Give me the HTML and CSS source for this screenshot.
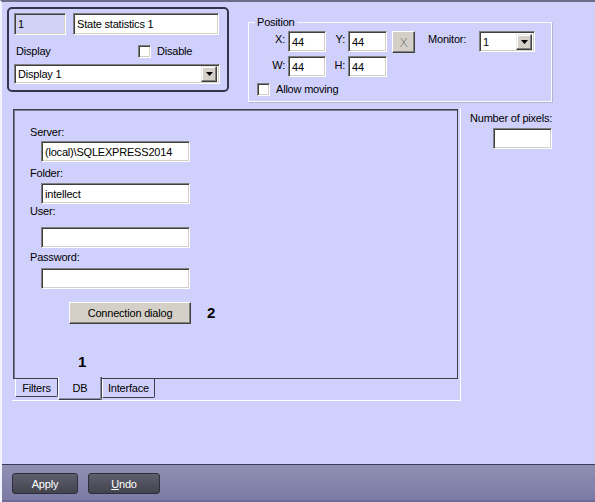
FILE: index.html
```html
<!DOCTYPE html>
<html>
<head>
<meta charset="utf-8">
<link rel="stylesheet" href="styles.css">
</head>
<body>
<div class="window">
  <div class="top">
    <div class="idpanel">
      <div class="row-fields">
        <div class="field field-id">1</div>
        <div class="field field-name">State statistics 1</div>
      </div>
      <div class="row-display">
        <span class="lbl-display">Display</span>
        <span class="check"><span class="box"></span><span>Disable</span></span>
      </div>
      <div class="field select select-display">
        <span class="val">Display 1</span>
        <span class="dd"><svg width="7" height="4" viewBox="0 0 7 4"><polygon points="0,0 7,0 3.5,4" fill="#000"/></svg></span>
      </div>
    </div>
    <fieldset class="position">
      <legend>Position</legend>
      <div class="prow prow1">
        <span class="plbl plbl-x">X:</span>
        <div class="field pin pin-x">44</div>
        <span class="plbl plbl-y">Y:</span>
        <div class="field pin pin-y">44</div>
        <div class="xbtn">X</div>
        <span class="mon">Monitor:</span>
        <div class="field select select-mon">
          <span class="val">1</span>
          <span class="dd"><svg width="7" height="4" viewBox="0 0 7 4"><polygon points="0,0 7,0 3.5,4" fill="#000"/></svg></span>
        </div>
      </div>
      <div class="prow prow2">
        <span class="plbl plbl-x">W:</span>
        <div class="field pin pin-x">44</div>
        <span class="plbl plbl-y">H:</span>
        <div class="field pin pin-y">44</div>
      </div>
      <div class="prow prow3">
        <span class="check"><span class="box"></span><span>Allow moving</span></span>
      </div>
    </fieldset>
  </div>

  <div class="middle">
    <div class="tabframe">
      <div class="tabpanel">
        <div class="flbl flbl-server">Server:</div>
        <div class="field dbin dbin-server">(local)\SQLEXPRESS2014</div>
        <div class="flbl flbl-folder">Folder:</div>
        <div class="field dbin dbin-folder">intellect</div>
        <div class="flbl flbl-user">User:</div>
        <div class="field dbin dbin-user"></div>
        <div class="flbl flbl-pass">Password:</div>
        <div class="field dbin dbin-pass"></div>
        <div class="btnrow">
          <div class="connbtn">Connection dialog</div>
          <span class="marker marker-2">2</span>
        </div>
        <div class="marker marker-1">1</div>
      </div>
      <div class="tabs">
        <div class="tab tab-filters">Filters</div>
        <div class="tab tab-db">DB</div>
        <div class="tab tab-interface">Interface</div>
      </div>
    </div>
    <div class="pixels">
      <div class="pixlbl">Number of pixels:</div>
      <div class="field pixin"></div>
    </div>
  </div>

  <div class="bottombar">
    <div class="bbtn bbtn-apply">Apply</div>
    <div class="bbtn bbtn-undo"><u>U</u>ndo</div>
  </div>
</div>
</body>
</html>
```

FILE: styles.css
```css
* { box-sizing: border-box; }
html, body { margin: 0; padding: 0; }
body {
  font-family: "Liberation Sans", Arial, sans-serif;
  font-size: 11px;
  letter-spacing: -0.2px;
  color: #000;
}
.window {
  width: 595px;
  height: 502px;
  background: #d0d0fc;
  border-top: 2px solid #6c6c88;
  border-left: 2px solid #f2f2ff;
  display: flex;
  flex-direction: column;
  overflow: hidden;
}

/* ---------- generic controls ---------- */
.field {
  background: #fff;
  border: 1px solid;
  border-color: #808080 #ffffff #ffffff #808080;
  box-shadow: inset 1px 1px 0 #404040, inset -1px -1px 0 #d4d0c8;
  display: flex;
  align-items: center;
  padding-left: 3px;
  line-height: 14px;
  white-space: nowrap;
}
.select { padding-right: 2px; justify-content: space-between; }
.dd {
  width: 16px;
  height: 16px;
  background: #d4d0c8;
  border: 1px solid;
  border-color: #e8e8e8 #404040 #404040 #e8e8e8;
  box-shadow: inset -1px -1px 0 #808080, inset 1px 1px 0 #fff;
  display: flex;
  align-items: center;
  justify-content: center;
}
.check { display: flex; align-items: center; }
.box {
  width: 13px;
  height: 13px;
  background: #fff;
  border: 1px solid;
  border-color: #808080 #ffffff #ffffff #808080;
  box-shadow: inset 1px 1px 0 #404040, inset -1px -1px 0 #d4d0c8;
  margin-right: 6px;
}

/* ---------- top ---------- */
.top {
  height: 106px;
  display: flex;
  align-items: flex-start;
  padding: 5px 0 0 5px;
}
.idpanel {
  width: 222px;
  height: 85px;
  border: 2px solid #34344c;
  border-radius: 5px;
  padding: 4px 0 0 5px;
}
.row-fields { display: flex; height: 22px; }
.field-id { width: 52px; height: 22px; background: #d2d2f6; margin-right: 7px; }
.field-name { width: 146px; height: 22px; }
.row-display {
  display: flex;
  align-items: center;
  height: 16px;
  margin-top: 8px;
}
.lbl-display { width: 124px; padding-left: 2px; }
.select-display { width: 206px; height: 20px; margin-top: 5px; }

.position {
  margin: 8px 0 0 19px;
  padding: 2px 0 0 0;
  width: 304px;
  height: 87px;
  border: 1px solid #fbfbff;
  box-shadow: 1px 1px 0 #b4b4d0;
  min-inline-size: 0;
}
.position legend {
  margin-left: 6px;
  padding: 0 2px;
  line-height: 14px;
}
.prow { display: flex; align-items: flex-start; }
.prow1 { height: 22px; }
.prow2 { height: 21px; margin-top: 3px; }
.prow3 { margin-top: 5px; padding-left: 8px; height: 14px; align-items: center; }
.plbl { text-align: right; padding-right: 3px; line-height: 14px; padding-top: 1px; }
.plbl-x { width: 39px; }
.plbl-y { width: 22px; }
.prow2 .plbl { padding-top: 2px; }
.pin { height: 21px; padding-left: 3px; }
.pin-x { width: 38px; }
.pin-y { width: 39px; }
.xbtn {
  width: 23px;
  height: 22px;
  margin-left: 5px;
  background: #d4d0c8;
  border: 1px solid;
  border-color: #fff #404040 #404040 #fff;
  box-shadow: inset -1px -1px 0 #808080;
  display: flex;
  align-items: center;
  justify-content: center;
  color: #707070;
  font-size: 13px;
  font-family: "DejaVu Sans", sans-serif;
  font-weight: 200;
}
.mon { margin-left: 13px; width: 51px; line-height: 14px; padding-top: 1px; }
.select-mon { width: 56px; height: 21px; }

/* ---------- middle ---------- */
.middle { display: flex; align-items: flex-start; }
.tabframe {
  margin-left: 10px;
  width: 449px;
  height: 293px;
  padding: 1px 0 0 1px;
  border-right: 1px solid #fff;
  border-bottom: 1px solid #fff;
}
.tabpanel {
  width: 445px;
  height: 270px;
  border: 1px solid #3c3c4c;
  box-shadow: inset 1px 1px 0 #7c7c94;
  padding: 15px 0 0 16px;
}
.flbl { height: 14px; line-height: 14px; }
.dbin { width: 149px; height: 21px; margin-left: 11px; }
.dbin-server { margin-top: 2px; }
.flbl-folder { margin-top: 4px; }
.dbin-folder { margin-top: 3px; }
.flbl-user { margin-top: 0; }
.dbin-user { margin-top: 9px; }
.flbl-pass { margin-top: 2px; }
.dbin-pass { margin-top: 4px; }
.btnrow { display: flex; align-items: center; margin-top: 13px; margin-left: 39px; }
.connbtn {
  width: 122px;
  height: 22px;
  background: #d4d0c8;
  border: 1px solid;
  border-color: #fff #404040 #404040 #fff;
  box-shadow: inset -1px -1px 0 #808080;
  display: flex;
  align-items: center;
  justify-content: center;
}
.marker {
  font-weight: bold;
  font-size: 15px;
  letter-spacing: 0;
  line-height: 18px;
}
.marker-2 { margin-left: 16px; }
.marker-1 { margin-top: 29px; margin-left: 48px; }

.tabs { display: flex; align-items: flex-start; padding-left: 2px; }
.tab {
  border-left: 1px solid #fff;
  border-right: 1px solid #404050;
  border-bottom: 1px solid #404050;
  border-bottom-right-radius: 2px;
  display: flex;
  align-items: center;
  justify-content: center;
  background: #d0d0fc;
}
.tab-filters { width: 43px; height: 18px; }
.tab-db { width: 44px; height: 23px; margin-top: -2px; padding-bottom: 1px; box-shadow: inset -1px -1px 0 #9090a8; }
.tab-interface { width: 53px; height: 19px; }

.pixels { margin-left: 9px; padding-top: 3px; }
.pixlbl { line-height: 14px; height: 14px; }
.pixin { width: 59px; height: 21px; margin: 3px 0 0 23px; }

/* ---------- bottom bar ---------- */
.bottombar {
  margin-top: auto;
  height: 38px;
  border-top: 1px solid #3c3c58;
  border-bottom: 2px solid #6c6c96;
  background: linear-gradient(#9090b4, #7a7aa4);
  display: flex;
  align-items: flex-start;
  padding: 8px 0 0 10px;
}
.bbtn {
  height: 21px;
  border: 1px solid #2e2e3a;
  border-radius: 3px;
  background: linear-gradient(#5e5e6e, #44444f);
  color: #fff;
  display: flex;
  align-items: center;
  justify-content: center;
  font-size: 11px;
}
.bbtn-apply { width: 66px; }
.bbtn-undo { width: 72px; margin-left: 10px; }
```
